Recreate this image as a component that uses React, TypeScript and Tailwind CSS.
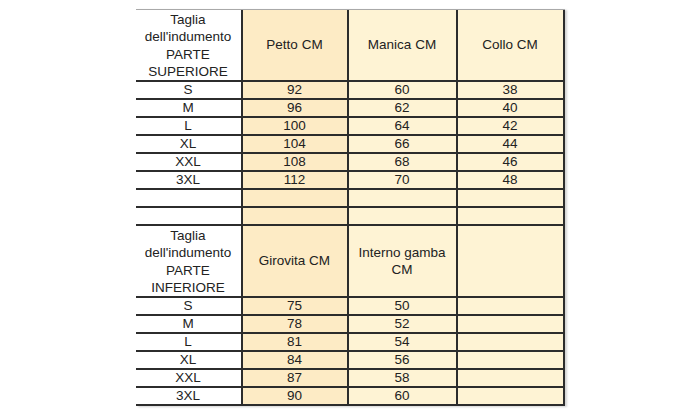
import React from 'react';

type Row = [string, string, string, string];

const upperRows: Row[] = [
  ['S', '92', '60', '38'],
  ['M', '96', '62', '40'],
  ['L', '100', '64', '42'],
  ['XL', '104', '66', '44'],
  ['XXL', '108', '68', '46'],
  ['3XL', '112', '70', '48'],
  ['', '', '', ''],
  ['', '', '', ''],
];

const lowerRows: Row[] = [
  ['S', '75', '50', ''],
  ['M', '78', '52', ''],
  ['L', '81', '54', ''],
  ['XL', '84', '56', ''],
  ['XXL', '87', '58', ''],
  ['3XL', '90', '60', ''],
];

const cols = [
  'w-[107px] bg-white',
  'w-[106px] bg-[#fdebc5]',
  'w-[109px] bg-[#fef3d4]',
  'w-[107px] bg-[#fef3d4]',
];

function HeaderRow({ cells }: { cells: React.ReactNode[] }) {
  return (
    <div className="flex h-[72px] border-b-2 border-[#2c2c2c]">
      {cells.map((c, i) => (
        <div
          key={i}
          className={`${cols[i]} flex items-center justify-center border-r-2 border-[#2c2c2c] text-center leading-[17.5px] ${i === 0 ? 'pt-[1px]' : ''}`}
        >
          {c}
        </div>
      ))}
    </div>
  );
}

function DataRow({ row }: { row: Row }) {
  return (
    <div className="flex h-[18px] border-b-2 border-[#2c2c2c]">
      {row.map((c, i) => (
        <div
          key={i}
          className={`${cols[i]} flex items-center justify-center border-r-2 border-[#2c2c2c] leading-[16px]`}
        >
          {c}
        </div>
      ))}
    </div>
  );
}

export default function App() {
  return (
    <div className="w-[700px] h-[420px] bg-white pt-[9px] overflow-hidden">
      <div
        className="w-[429px] mx-auto border-t border-[#a9a9a9] text-[13.5px] text-[#222] shadow-[2px_1px_2px_rgba(0,0,0,0.18)]"
        style={{ fontFamily: '"Liberation Sans", Arial, sans-serif' }}
      >
        <HeaderRow
          cells={[
            <span key="a">Taglia<br />dell'indumento<br />PARTE<br />SUPERIORE</span>,
            'Petto CM',
            'Manica CM',
            'Collo CM',
          ]}
        />
        {upperRows.map((r, i) => (
          <DataRow key={`u${i}`} row={r} />
        ))}
        <HeaderRow
          cells={[
            <span key="b">Taglia<br />dell'indumento<br />PARTE<br />INFERIORE</span>,
            'Girovita CM',
            <span key="c">Interno gamba<br />CM</span>,
            '',
          ]}
        />
        {lowerRows.map((r, i) => (
          <DataRow key={`l${i}`} row={r} />
        ))}
      </div>
    </div>
  );
}
